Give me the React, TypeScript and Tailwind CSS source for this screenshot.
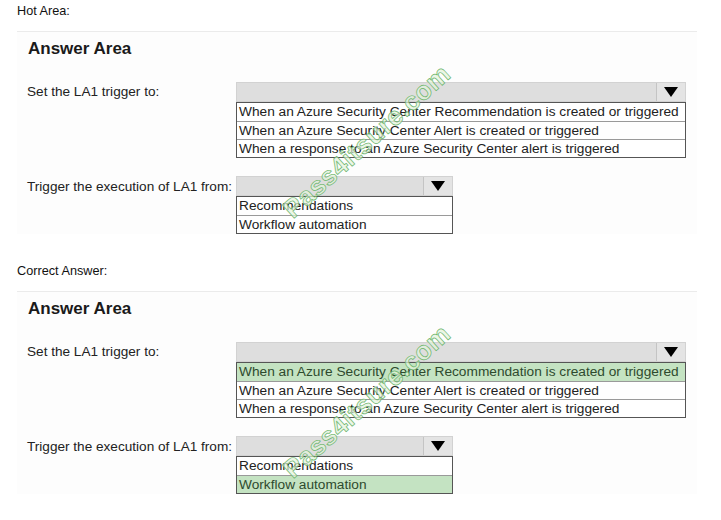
import React from "react";

type Opt = { text: string; picked?: boolean };

const Arrow = () => (
  <svg width="14" height="10" viewBox="0 0 14 10">
    <path d="M0 0 L14 0 L7 10 Z" fill="#000" />
  </svg>
);

const Dropdown = ({ width, options }: { width: number; options: Opt[] }) => (
  <div style={{ width }} className="flex flex-col">
    <div className="flex h-[20px] bg-[#dedede] border border-[#d2d2d2]">
      <div className="flex-1" />
      <div className="flex w-[29px] items-center justify-center border-l border-[#c4c4c4] bg-[#e4e4e4]">
        <Arrow />
      </div>
    </div>
    <div className="flex flex-col border border-[#555] bg-white">
      {options.map((o, i) => (
        <div
          key={i}
          className={
            "h-[18px] px-[2px] text-[13.7px] leading-[18px] whitespace-nowrap " +
            (i > 0 ? "border-t border-[#9a9a9a] " : "") +
            (o.picked ? "bg-[#c4e3c2] text-[#2e4a2e]" : "text-[#222]")
          }
        >
          {o.text}
        </div>
      ))}
    </div>
  </div>
);

const Watermark = () => (
  <div className="absolute left-[256px] top-[122px] w-[222px] text-center -rotate-[42deg] text-[26px] font-bold tracking-[0.5px] text-[#e3f3dc]/70 [-webkit-text-stroke:0.7px_#6ab46a] pointer-events-none select-none">
    Pass4itsure.com
  </div>
);

const Section = ({ title, picked }: { title: string; picked: boolean }) => (
  <div className="relative h-[260px]">
    <div className="pl-[17px] pt-[2px] h-[31px] text-[12.7px] text-[#111]">{title}</div>
    <div className="ml-[17px] mr-[24px] border-t border-[#ebebeb] bg-[#fdfdfd] pt-[6px]">
      <h2 className="pl-[11px] text-[17px] font-bold text-[#1a1a1a] leading-[22px]">Answer Area</h2>
      <div className="flex mt-[22px]">
        <div className="w-[219px] pl-[10px] text-[13.6px] text-[#222]">Set the LA1 trigger to:</div>
        <Dropdown
          width={450}
          options={[
            { text: "When an Azure Security Center Recommendation is created or triggered", picked },
            { text: "When an Azure Security Center Alert is created or triggered" },
            { text: "When a response to an Azure Security Center alert is triggered" },
          ]}
        />
      </div>
      <div className="flex mt-[18px]">
        <div className="w-[219px] pl-[10px] pt-[1px] text-[13.6px] text-[#222]">Trigger the execution of LA1 from:</div>
        <Dropdown
          width={217}
          options={[{ text: "Recommendations" }, { text: "Workflow automation", picked }]}
        />
      </div>
    </div>
    <Watermark />
  </div>
);

export default function App() {
  return (
    <div className="w-[721px] h-[520px] bg-white overflow-hidden font-['Liberation_Sans',Arial,sans-serif]">
      <Section title="Hot Area:" picked={false} />
      <Section title="Correct Answer:" picked={true} />
    </div>
  );
}
